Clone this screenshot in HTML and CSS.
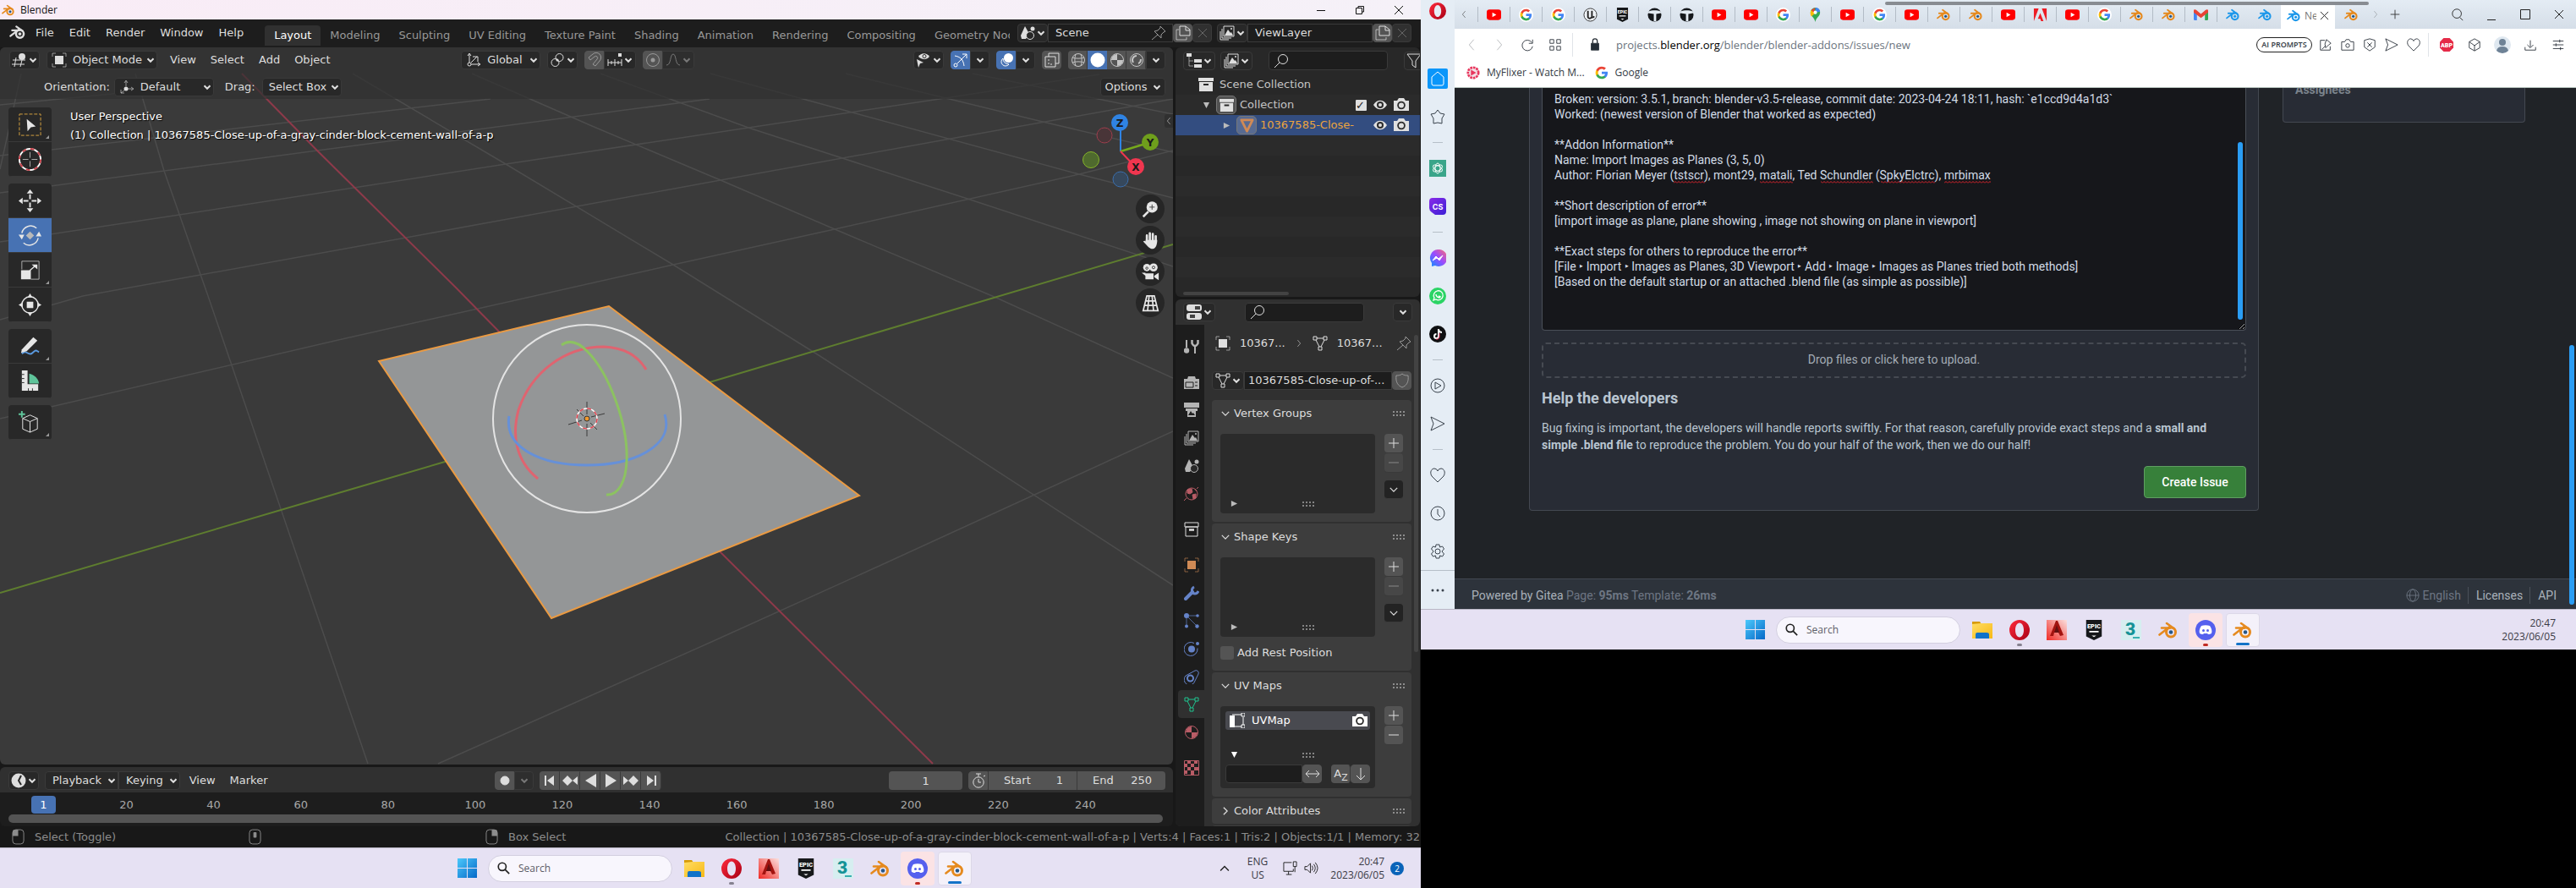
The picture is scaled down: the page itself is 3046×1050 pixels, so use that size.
FILE: index.html
```html
<!DOCTYPE html>
<html lang="en">
<head>
    <meta charset="UTF-8">
    <meta name="viewport" content="width=device-width, initial-scale=1.0">
    <title>Blender</title>
    <link rel="stylesheet" href="styles.css">
</head>
<body>
    <!-- gradients -->
    <svg class="paints" aria-hidden="true">
        <defs>
            <linearGradient id="g-opera" x1="0" y1="0" x2="1" y2="1"><stop offset="0" stop-color="#ff2b3d"/><stop offset="1" stop-color="#a70014"/></linearGradient>
            <linearGradient id="g-win" x1="0" y1="0" x2="1" y2="1"><stop offset="0" stop-color="#4cc9fb"/><stop offset="1" stop-color="#0568c8"/></linearGradient>
            <linearGradient id="g-folder" x1="0" y1="0" x2="1" y2="1"><stop offset="0" stop-color="#ffdc63"/><stop offset="1" stop-color="#f7b916"/></linearGradient>
            <linearGradient id="g-acad" x1="0" y1="1" x2="1" y2="0"><stop offset="0" stop-color="#f02a25"/><stop offset="1" stop-color="#fbe0de"/></linearGradient>
            <linearGradient id="g-cs" x1="0" y1="0" x2="1" y2="1"><stop offset="0" stop-color="#8a2be8"/><stop offset="1" stop-color="#3a1fd6"/></linearGradient>
            <linearGradient id="g-msg" x1="0" y1="1" x2="1" y2="0"><stop offset="0" stop-color="#0a90ff"/><stop offset=".5" stop-color="#9a4bff"/><stop offset="1" stop-color="#ff6b70"/></linearGradient>
            <pattern id="p-wave" width="4" height="3" patternUnits="userSpaceOnUse"><path d="M0 2.5l2-2 2 2" fill="none" stroke="#e0242c"/></pattern>
        </defs>
    </svg>
    <!-- icon sprite -->
    <svg class="sprite" aria-hidden="true">
        <symbol id="i-chev" viewBox="0 0 10 10"><path d="M1.5 3.2L5 6.8l3.5-3.6"/></symbol>
        <symbol id="i-tri-d" viewBox="0 0 10 10"><path d="M1 1h8L5 9z" fill="currentColor" stroke="none"/></symbol>
        <symbol id="i-tri-r" viewBox="0 0 10 10"><path d="M1 1l8 4-8 4z" fill="currentColor" stroke="none"/></symbol>
        <symbol id="i-blender" viewBox="0 0 24 20"><g fill="none" stroke="currentColor" stroke-linecap="round" stroke-linejoin="round"><circle cx="15" cy="12.5" r="5.5" stroke-width="3"/><path d="M1.5 15.5L13 6.5M4 7.5h10M10 2l9 6.5" stroke-width="2.6"/></g><circle cx="15" cy="12.5" r="2.3"/></symbol>
        <symbol id="i-3dview" viewBox="0 0 18 18"><path d="M1 9h15M0 14h15M5 6L3 17M12 9l-2 8"/><circle cx="12" cy="5" r="4" fill="currentColor" stroke="none"/></symbol>
        <symbol id="i-object" viewBox="0 0 18 18"><path d="M1 5V1h4M13 1h4v4M17 13v4h-4M5 17H1v-4" opacity=".6"/><path d="M4 4h10v10H4z" fill="currentColor" stroke="none"/></symbol>
        <symbol id="i-axes" viewBox="0 0 18 18"><circle cx="4" cy="14" r="2"/><path d="M4 12V2M2 4l2-3 2 3M6 14h10M14 12l3 2-3 2M6 12l7-7M8 5h6v6"/></symbol>
        <symbol id="i-axes2" viewBox="0 0 18 18"><circle cx="8" cy="11" r="2.5" fill="currentColor" stroke="none"/><path d="M8 8V2M6 4l2-3 2 3M10 11h6M14 9l3 2-3 2M6 13l-4 3M2 12v4h4" opacity=".6"/></symbol>
        <symbol id="i-pivot" viewBox="0 0 18 18"><circle cx="11.5" cy="6" r="4.5"/><circle cx="6.5" cy="12" r="4.5"/><circle cx="9" cy="9" r="1.5" fill="currentColor" stroke="none"/></symbol>
        <symbol id="i-magnet" viewBox="0 0 18 18"><path d="M2 6l5-4a5.5 5.5 0 0 1 8 8l-5 6-3-2 5-6a2 2 0 0 0-3-3L4 9z"/></symbol>
        <symbol id="i-snap" viewBox="0 0 18 18"><path d="M1 8v8M5 10v4M9 8v8M13 10v4M17 8v8M1 12h16"/><path d="M13 1h4v4h-4z" fill="currentColor" stroke="none"/></symbol>
        <symbol id="i-prop" viewBox="0 0 18 18"><circle cx="9" cy="9" r="7.5"/><circle cx="9" cy="9" r="2.5" fill="currentColor" stroke="none"/></symbol>
        <symbol id="i-curve" viewBox="0 0 18 18"><path d="M1 15c6 0 4-13 8-13s2 13 8 13"/></symbol>
        <symbol id="i-eyecur" viewBox="0 0 18 18"><path d="M3 5c3-5 10-5 13 0-3 4-9 4-13 0z" fill="currentColor" stroke="none"/><circle cx="10" cy="4.5" r="2" stroke="#282828" fill="none"/><path d="M1 8l8 4-4 1-2 5z" fill="currentColor" stroke="none"/></symbol>
        <symbol id="i-gizmo" viewBox="0 0 18 18"><circle cx="3" cy="15" r="2"/><path d="M2 4c6 1 10 4 11 12M5 13L16 2M11 2h5v5"/></symbol>
        <symbol id="i-overlay" viewBox="0 0 18 18"><circle cx="11.5" cy="6.5" r="5.5" fill="currentColor" stroke="none"/><path d="M5 7a5 5 0 1 0 7 7M5 7q0 6 7 7"/></symbol>
        <symbol id="i-xray" viewBox="0 0 18 18"><path d="M5 5V1h12v12h-4M1 5h12v12H1z"/><path d="M5 8v6h4" stroke-dasharray="2 2"/></symbol>
        <symbol id="i-wire" viewBox="0 0 18 18"><circle cx="9" cy="9" r="7.5"/><path d="M2 6c4 1.5 10 1.5 14 0M2 12c4-1.5 10-1.5 14 0M6 2c-1.5 4-1.5 10 0 14M12 2c1.5 4 1.5 10 0 14"/></symbol>
        <symbol id="i-solid" viewBox="0 0 18 18"><circle cx="9" cy="9" r="8.5" fill="currentColor" stroke="none"/></symbol>
        <symbol id="i-mat" viewBox="0 0 18 18"><circle cx="9" cy="9" r="7.5"/><path d="M9 2v7h7a7 7 0 0 1-7 7V9H2a7 7 0 0 1 7-7z" fill="currentColor" stroke="none"/></symbol>
        <symbol id="i-render" viewBox="0 0 18 18"><circle cx="9" cy="9" r="7.5"/><path d="M5 12a5 5 0 0 1 4-8M11 13c3-1 3-4 3-5" stroke-width="2"/></symbol>
        <symbol id="i-scene" viewBox="0 0 18 18"><path d="M6 1l5 9-4 6H2l-1-4z" fill="currentColor" stroke="none"/><circle cx="12" cy="12" r="4.5" fill="#282828"/><circle cx="15" cy="4" r="2.5" fill="currentColor" stroke="none"/></symbol>
        <symbol id="i-vlayer" viewBox="0 0 18 18"><path d="M5 1h12v12H5zM3 4v11h11M1 7v10h10"/><path d="M6 12l4-7 3 4 1-1 2 4z" fill="currentColor" stroke="none"/><circle cx="14" cy="4" r="1" fill="currentColor" stroke="none"/></symbol>
        <symbol id="i-copy" viewBox="0 0 18 18"><path d="M5 12V1h7l5 4v7zM12 1v5h5"/><path d="M4 5H1v12h12v-3" opacity=".7"/></symbol>
        <symbol id="i-x" viewBox="0 0 18 18"><path d="M4 4l10 10M14 4L4 14"/></symbol>
        <symbol id="i-pin" viewBox="0 0 18 18"><path d="M11 1l6 6-2 1-3 3v4l-8-8 4-1 3-3zM8 11l-7 6"/></symbol>
        <symbol id="i-search" viewBox="0 0 18 18"><circle cx="11" cy="7" r="5.5"/><path d="M7 11l-6 6"/></symbol>
        <symbol id="i-filter" viewBox="0 0 18 18"><path d="M1 1h16l-6 8v8l-4-3V9z"/></symbol>
        <symbol id="i-tree" viewBox="0 0 18 18"><path d="M0 0h6v4H0zM9 7h9v4H9zM9 13h9v4H9z" fill="currentColor" stroke="none"/><path d="M3 4v11h5M3 9h5" opacity=".6"/></symbol>
        <symbol id="i-coll" viewBox="0 0 18 18"><path d="M0 1h18v4H0zM1 6h16v11H1z" fill="currentColor" stroke="none"/><path d="M6 9h6" stroke="#282828" stroke-width="2"/></symbol>
        <symbol id="i-coll2" viewBox="0 0 18 18"><path d="M1 1h16v5H1zM2 6h14v11H2z"/><path d="M6 9.5h6" stroke-width="2.5"/></symbol>
        <symbol id="i-meshobj" viewBox="0 0 18 18"><path d="M2 2h14L9 16z" stroke-width="3" stroke-linejoin="round"/></symbol>
        <symbol id="i-mesh" viewBox="0 0 18 18"><path d="M1 1h4v4H1zM13 1h4v4h-4zM7 13h4v4H7zM5 3h8M4 5l4 8M14 5l-4 8"/></symbol>
        <symbol id="i-eye" viewBox="0 0 18 18"><path d="M1 9c4-7 12-7 16 0-4 7-12 7-16 0z" fill="currentColor" stroke="none"/><circle cx="9" cy="9" r="4" fill="#2b2b2b" stroke="none"/><circle cx="9" cy="9" r="2" fill="currentColor" stroke="none"/></symbol>
        <symbol id="i-cam" viewBox="0 0 18 18"><path d="M0 4h4l2-3h6l2 3h4v12H0z" fill="currentColor" stroke="none"/><circle cx="9" cy="9.5" r="4.8" fill="#2b2b2b" stroke="none"/><circle cx="9" cy="9.5" r="3" fill="currentColor" stroke="none"/></symbol>
        <symbol id="i-propedit" viewBox="0 0 18 18"><rect y="0" width="18" height="8" rx="3" fill="currentColor" stroke="none"/><rect y="10" width="18" height="8" rx="3" fill="currentColor" stroke="none"/><path d="M10 4h6M10 14h-6" stroke="#444" stroke-width="4"/></symbol>
        <symbol id="i-tool" viewBox="0 0 18 18"><path d="M3 1v9M13 8v9" stroke-width="2"/><circle cx="3" cy="13.5" r="3.2" fill="currentColor" stroke="none"/><path d="M9.5 1v4c2 4 5 4 7 0V1" stroke-width="2.5"/></symbol>
        <symbol id="i-rend2" viewBox="0 0 18 18"><path d="M0 5h4l1-3h8l1 3h4v12H0z" fill="currentColor" stroke="none"/><path d="M2 9h9v6H2zM13 9h3M13 13h3" stroke="#1d1d1d"/></symbol>
        <symbol id="i-out" viewBox="0 0 18 18"><path d="M0 0h18v6H0zM2 7h14v3h-2v7H4v-7H2z" fill="currentColor" stroke="none"/><path d="M5 15l3-5 2 3 1-1 2 3z" fill="#1d1d1d" stroke="none"/></symbol>
        <symbol id="i-world" viewBox="0 0 18 18"><circle cx="9" cy="9" r="7"/><path d="M4 4l5-1 1 4-3 2-3-1zM10 10l4-1v5l-3 1zM13 3l2 3" fill="currentColor"/><path d="M0 17l3-3M15 3l2-2"/></symbol>
        <symbol id="i-wrench" viewBox="0 0 18 18"><path d="M2 16L10 8" stroke-width="4" stroke-linecap="round"/><path d="M12 2c-4 2-3 8 1 8 2 0 3-1 4-3" stroke-width="3"/></symbol>
        <symbol id="i-part" viewBox="0 0 18 18"><circle cx="3" cy="3" r="3" fill="currentColor" stroke="none"/><path d="M3 3v12M3 3h12M4 4l11 11" opacity=".7"/><circle cx="3" cy="15.5" r="2" fill="currentColor" stroke="none"/><circle cx="16" cy="3" r="1.8" fill="currentColor" stroke="none"/><circle cx="15.5" cy="15.5" r="2.2" fill="currentColor" stroke="none"/></symbol>
        <symbol id="i-phys" viewBox="0 0 18 18"><circle cx="9" cy="9.5" r="4" fill="currentColor" stroke="none"/><path d="M12 2.5a8 8 0 1 0 4 6"/><circle cx="16" cy="3" r="2" fill="currentColor" stroke="none"/></symbol>
        <symbol id="i-constr" viewBox="0 0 18 18"><path d="M2 8L13 2a3 3 0 0 1 4 4l-4 8M2 8a6.5 6.5 0 1 0 11 6"/><circle cx="7.5" cy="11" r="3.5" stroke-width="2"/></symbol>
        <symbol id="i-tex" viewBox="0 0 18 18"><path d="M.5.5h17v17H.5z"/><path d="M4 0h4v4H4zM12 0h4v4h-4zM0 4h4v4H0zM8 4h4v4H8zM4 8h4v4H4zM12 8h5v4h-5zM0 12h4v4H0zM8 12h4v5H8z" fill="currentColor" stroke="none"/></symbol>
        <symbol id="i-shield" viewBox="0 0 18 18"><path d="M9 1c2 2 5 2 7 2 1 8-2 12-7 14C4 15 1 11 2 3c2 0 5 0 7-2z"/></symbol>
        <symbol id="i-uv" viewBox="0 0 18 18"><path d="M0 3h6v14H0z" fill="currentColor" stroke="none"/><path d="M3 2h11M6 16h8M16 5v9"/><path d="M14 0h4v4h-4zM14 14h4v4h-4z"/></symbol>
        <symbol id="i-plus" viewBox="0 0 18 18"><path d="M9 3v12M3 9h12"/></symbol>
        <symbol id="i-minus" viewBox="0 0 18 18"><path d="M3 9h12"/></symbol>
        <symbol id="i-lr" viewBox="0 0 18 18"><path d="M1 9h16M5 5L1 9l4 4M13 5l4 4-4 4"/></symbol>
        <symbol id="i-down" viewBox="0 0 18 18"><path d="M9 2v14M4 11l5 5 5-5"/></symbol>
        <symbol id="i-grip" viewBox="0 0 15 8"><path d="M0 2h15M0 6h15" stroke="currentColor" stroke-dasharray="2 2"/></symbol>
        <symbol id="i-clock" viewBox="0 0 18 18"><circle cx="9" cy="9" r="8.5" fill="currentColor" stroke="none"/><path d="M12 3L9 9l3 5" stroke="#282828" stroke-width="2"/></symbol>
        <symbol id="i-watch" viewBox="0 0 18 18"><circle cx="9" cy="11" r="6.2"/><path d="M9 7v4h3M6 1h6M9 1v3M15 4l2-1"/></symbol>
        <symbol id="i-mouse-l" viewBox="0 0 16 20"><rect x="1" y="1" width="14" height="18" rx="4"/><path d="M1 9V4a3 3 0 0 1 3-3h4v8z" fill="currentColor" stroke="none"/></symbol>
        <symbol id="i-mouse-m" viewBox="0 0 16 20"><rect x="1" y="1" width="14" height="18" rx="4"/><rect x="6" y="4" width="4" height="7" rx="1" fill="currentColor" stroke="none"/></symbol>
        <symbol id="i-mouse-r" viewBox="0 0 16 20"><rect x="1" y="1" width="14" height="18" rx="4"/><path d="M8 1h4a3 3 0 0 1 3 3v5H8z" fill="currentColor" stroke="none"/></symbol>
        <!-- tools -->
        <symbol id="t-select" viewBox="0 0 30 30"><rect x="2" y="2" width="26" height="26" stroke="#d9a441" stroke-dasharray="4 2"/><path d="M11 8l11 9-6 1-4 5z" fill="currentColor" stroke="none"/></symbol>
        <symbol id="t-cursor" viewBox="0 0 30 30"><circle cx="15" cy="15" r="13" stroke="#fff" stroke-width="2"/><circle cx="15" cy="15" r="13" stroke="#c8414a" stroke-width="2" stroke-dasharray="5 5.2"/><path d="M15 6v7M15 17v7M6 15h7M17 15h7" opacity=".7"/></symbol>
        <symbol id="t-move" viewBox="0 0 30 30"><path d="M15 7v6M15 17v6M7 15h6M17 15h6" stroke-width="2"/><path d="M11 6h8l-4-5zM11 24h8l-4 5zM6 11v8l-5-4zM24 11v8l5-4z" fill="currentColor" stroke="none"/></symbol>
        <symbol id="t-rotate" viewBox="0 0 30 30"><path d="M5 12a11 11 0 0 1 18-6M25 18a11 11 0 0 1-18 6" stroke-width="1.5"/><path d="M1 14h7l-3 6zM22 16h7l-3-6z" fill="currentColor" stroke="none"/><path d="M15 10l5 5-5 5-5-5z" fill="#b9b9b9" stroke="none"/></symbol>
        <symbol id="t-scale" viewBox="0 0 30 30"><path d="M5 14V4h21v22H16" opacity=".7"/><path d="M4 15h12v11H4zM17 8h7v6zM14 15l7-6 1 1-7 6z" fill="currentColor" stroke="none"/></symbol>
        <symbol id="t-trans" viewBox="0 0 30 30"><circle cx="15" cy="15" r="10" stroke-width="1.5"/><path d="M11 11h8v8h-8zM12 6h6l-3-5zM12 24h6l-3 5zM6 12v6l-5-3zM24 12v6l5-3z" fill="currentColor" stroke="none"/></symbol>
        <symbol id="t-note" viewBox="0 0 30 30"><path d="M5 24c6-6 8 4 13-1s5-2 8-1" stroke="#5a9ae0" stroke-width="2"/><path d="M5 19L19 4l5 4L11 21l-7 2z" fill="currentColor" stroke="none"/></symbol>
        <symbol id="t-measure" viewBox="0 0 30 30"><path d="M5 2h7v17h13v8H5z" fill="currentColor" stroke="none"/><path d="M14 6c7 2 11 6 12 12H14z" fill="#5fc49a" stroke="none"/><path d="M5 7h3M5 12h3M5 17h3M13 27v-3M18 27v-3" stroke="#282828"/></symbol>
        <symbol id="t-cube" viewBox="0 0 30 30"><path d="M6 10l9-4 9 4v13l-9 4-9-4zM6 10l9 4 9-4M15 14v13"/><path d="M5 1v8M1 5h8" stroke="#5fc49a" stroke-width="2"/></symbol>
        <symbol id="n-zoom" viewBox="0 0 24 24"><circle cx="14" cy="9" r="7.5" fill="currentColor" stroke="none"/><path d="M9 15l-7 7" stroke-width="3"/><path d="M14 5.5v7M10.5 9h7" stroke="#333"/></symbol>
        <symbol id="n-hand" viewBox="0 0 24 24"><path d="M7 13V5M11 12V2M15 12V3M19 14V6" stroke-width="3" stroke-linecap="round"/><path d="M5 11h16c0 6-2 12-6 12-5 0-6-3-13-10 2-2 4 0 4 1z" fill="currentColor" stroke="none"/></symbol>
        <symbol id="n-cam" viewBox="0 0 24 24"><circle cx="7" cy="6" r="5" fill="currentColor" stroke="none"/><circle cx="16" cy="6" r="5.5" fill="currentColor" stroke="none"/><path d="M5 14h11v8H5zM17 17l6-4v10l-6-4zM0 13h5v4z" fill="currentColor" stroke="none"/><circle cx="7" cy="7" r="1.5" stroke="#333"/><circle cx="16" cy="6" r="1.8" stroke="#333"/></symbol>
        <symbol id="n-grid" viewBox="0 0 24 24"><path d="M7 2h10l5 20H2zM5 9h14M4 15h17M10 2L8 22M14 2l2 20" stroke-width="2"/></symbol>
        <!-- favicons and app icons -->
        <symbol id="f-yt" viewBox="0 0 18 18"><rect y="2.5" width="18" height="13" rx="3.5" fill="#f00"/><path d="M7 6l5 3-5 3z" fill="#fff"/></symbol>
        <symbol id="f-google" viewBox="0 0 24 24"><path d="M22.56 12.25c0-.78-.07-1.53-.2-2.25H12v4.26h5.92c-.26 1.37-1.04 2.53-2.21 3.31v2.77h3.57c2.08-1.92 3.28-4.74 3.28-8.09z" fill="#4285f4"/><path d="M12 23c2.97 0 5.46-.98 7.28-2.66l-3.57-2.77c-.98.66-2.23 1.06-3.71 1.06-2.86 0-5.29-1.93-6.16-4.53H2.18v2.84C3.99 20.53 7.7 23 12 23z" fill="#34a853"/><path d="M5.84 14.09a6.6 6.6 0 0 1 0-4.18V7.07H2.18a11 11 0 0 0 0 9.86z" fill="#fbbc05"/><path d="M12 5.38c1.62 0 3.06.56 4.21 1.64l3.15-3.15C17.45 2.09 14.97 1 12 1 7.7 1 3.99 3.47 2.18 7.07l3.66 2.84c.87-2.6 3.3-4.53 6.16-4.53z" fill="#ea4335"/></symbol>
        <symbol id="f-unreal" viewBox="0 0 18 18"><circle cx="9" cy="9" r="8" fill="#f0f4f8" stroke="#333"/><path d="M6 4v8c1 2 3 2 5 0V4M11 12c1 1 2 0 3-1" fill="none" stroke="#222" stroke-width="2"/></symbol>
        <symbol id="f-epic" viewBox="0 0 24 26"><path d="M2 0h20v21l-10 5-10-5z" fill="#16181a"/><text x="12" y="11" text-anchor="middle" font-family="Roboto" font-weight="900" font-size="8" fill="#fff">EPIC</text><path d="M6 14h12v2H6zM9 20h6l-3 2z" fill="#fff"/></symbol>
        <symbol id="f-t" viewBox="0 0 18 18"><circle cx="9" cy="9" r="8.5" fill="#16191c"/><path d="M1 5c5-2 11-2 16 0v2l-6 1v9H8V8L1 7z" fill="#e4ecf3"/><path d="M4 3c3-2 7-2 10 0-3-1-7-1-10 0z" fill="#16191c"/></symbol>
        <symbol id="f-maps" viewBox="0 0 18 18"><path d="M9 0a6 6 0 0 1 6 6c0 5-5 6-6 12C8 12 3 11 3 6a6 6 0 0 1 6-6z" fill="#34a853"/><path d="M9 0a6 6 0 0 1 6 5l-5 1z" fill="#4285f4"/><path d="M4 3l5 4-5 4c-2-3-1-6 0-8z" fill="#fbbc04"/><path d="M9 0L4 3l3 3z" fill="#ea4335"/><circle cx="9" cy="6" r="2.2" fill="#fff"/></symbol>
        <symbol id="f-adobe" viewBox="0 0 18 18"><path d="M1 1h6L1 17zM17 1h-6l6 16zM9 7l4 10h-3l-1-3H6z" fill="#ed1c24"/></symbol>
        <symbol id="f-gmail" viewBox="0 0 18 14"><path d="M0 2h4v12H1l-1-1z" fill="#4285f4"/><path d="M14 2h4v11l-1 1h-3z" fill="#34a853"/><path d="M0 2c0-2 2-2 3-1l6 5 6-5c1-1 3-1 3 1v2l-9 7-9-7z" fill="#ea4335"/></symbol>
        <symbol id="f-flix" viewBox="0 0 18 18"><circle cx="9" cy="9" r="7" fill="#f2dfe4" stroke="#e8365d" stroke-width="3" stroke-dasharray="3 1"/><path d="M6 5l7 4-7 4z" fill="#e8365d"/></symbol>
        <symbol id="a-opera" viewBox="0 0 24 24"><path fill-rule="evenodd" d="M12 0a12 12 0 1 1 0 24 12 12 0 0 1 0-24zm0 3.5c-3 0-5 4-5 8.5s2 8.5 5 8.5 5-4 5-8.5-2-8.5-5-8.5z" fill="url(#g-opera)"/></symbol>
        <symbol id="a-win" viewBox="0 0 24 24"><path d="M0 0h11.5v11.5H0zM12.5 0H24v11.5H12.5zM0 12.5h11.5V24H0zM12.5 12.5H24V24H12.5z" fill="url(#g-win)"/></symbol>
        <symbol id="a-folder" viewBox="0 0 24 24"><path d="M0 2h9l2 3H0z" fill="#d79b06"/><path d="M0 5l10-1h14v18H0z" fill="url(#g-folder)"/><path d="M4 22v-5q0-2 2-2h11q3 0 3 2v5z" fill="#1072c9"/></symbol>
        <symbol id="a-acad" viewBox="0 0 24 24"><path d="M0 0h24v24H0z" fill="url(#g-acad)"/><path d="M11 1h2l7 17-4 1-2-4H9l-1 4H4z" fill="#a31410"/><path d="M12 6l3 9H9z" fill="#641010"/></symbol>
        <symbol id="a-max" viewBox="0 0 24 24"><path d="M0 0h24v24H0z" fill="#d6eef0"/><text x="11" y="18" text-anchor="middle" font-family="Roboto" font-weight="900" font-size="21" fill="#159396">3</text><path d="M14 20h8v2h-8z" fill="#38b0b0"/></symbol>
        <symbol id="a-discord" viewBox="0 0 24 24"><circle cx="12" cy="12" r="12" fill="#5560ee"/><path d="M7 7c3-1 7-1 10 0 2 3 3 6 2 9-2 1-3 1-4 1l-1-1h-4l-1 1c-1 0-2 0-4-1-1-3 0-6 2-9z" fill="#fff"/><circle cx="9.5" cy="12.5" r="1.5" fill="#5560ee"/><circle cx="14.5" cy="12.5" r="1.5" fill="#5560ee"/></symbol>
        <symbol id="a-gpt" viewBox="0 0 20 20"><path d="M0 0h20v20H0z" fill="#3aa58a"/><g fill="none" stroke="#fff"><ellipse cx="10" cy="10" rx="3" ry="6"/><ellipse cx="10" cy="10" rx="3" ry="6" transform="rotate(60 10 10)"/><ellipse cx="10" cy="10" rx="3" ry="6" transform="rotate(120 10 10)"/></g></symbol>
        <symbol id="a-cs" viewBox="0 0 20 20"><path d="M4 0h12q4 0 4 4v12q0 4-4 4H7l-4-3q-3-2-3-5V4q0-4 4-4z" fill="url(#g-cs)"/><text x="10" y="13.5" text-anchor="middle" font-family="Inter" font-weight="700" font-size="9" fill="#fff">CS</text></symbol>
        <symbol id="a-msg" viewBox="0 0 20 20"><path d="M10 0a10 10 0 1 1-3 19l-4 1v-4A10 10 0 0 1 10 0z" fill="url(#g-msg)"/><path d="M4 13l4-5 3 3 5-4-4 6-3-3z" fill="#fff" stroke="#fff"/></symbol>
        <symbol id="a-wa" viewBox="0 0 20 20"><circle cx="10" cy="10" r="10" fill="#2bd465"/><path d="M5 15l1-3a5.5 5.5 0 1 1 2 2z" fill="none" stroke="#fff" stroke-width="1.3"/><path d="M8 8c0 2 2 4 4 4l1-1-2-1" fill="none" stroke="#fff" stroke-width="1.5"/></symbol>
        <symbol id="a-tt" viewBox="0 0 20 20"><circle cx="10" cy="10" r="10" fill="#0f1012"/><path d="M11 4v8.5a2.5 2.5 0 1 1-2.5-2.5M11 5q1 3 4 3" fill="none" stroke="#fff" stroke-width="2"/><path d="M12 9v4a3 3 0 0 1-4 3" fill="none" stroke="#f0325a"/></symbol>
        <!-- browser line icons -->
        <symbol id="b-home" viewBox="0 0 18 18"><path d="M2 7l7-6 7 6v8q0 2-2 2H4q-2 0-2-2z"/></symbol>
        <symbol id="b-star" viewBox="0 0 18 18"><path d="M9 1l3 4 5 1-3 5v6l-5-1-5 1v-6L1 6l5-1z"/></symbol>
        <symbol id="b-play" viewBox="0 0 18 18"><circle cx="9" cy="9" r="8"/><path d="M6 5l7 4-7 4z"/></symbol>
        <symbol id="b-send" viewBox="0 0 18 18"><path d="M1 1l16 8-16 8 3-8z"/></symbol>
        <symbol id="b-heart" viewBox="0 0 18 18"><path d="M9 17L2 10C-1 5 2 1 5 1q3 0 4 3 1-3 4-3c3 0 6 4 3 9z"/></symbol>
        <symbol id="b-clock" viewBox="0 0 18 18"><circle cx="9" cy="9" r="8"/><path d="M9 4v6l3 3"/></symbol>
        <symbol id="b-gear" viewBox="0 0 18 18"><circle cx="9" cy="9" r="3"/><path d="M7 1h4l.5 3 3-1 2 3L14 9l2.500 3-2 3-3-1-.5 3H7l-.5-3-3 1-2-3L4 9 1.500 6l2-3 3 1z" stroke-linejoin="round"/></symbol>
        <symbol id="b-left" viewBox="0 0 18 18"><path d="M12 2L6 9l6 7"/></symbol>
        <symbol id="b-right" viewBox="0 0 18 18"><path d="M6 2l6 7-6 7"/></symbol>
        <symbol id="b-reload" viewBox="0 0 18 18"><path d="M15 6a7 7 0 1 0 1 5M16 2v5h-5"/></symbol>
        <symbol id="b-speed" viewBox="0 0 18 18"><path d="M2 2h5v5H2zM11 2h5v5h-5zM2 11h5v5H2zM11 11h5v5h-5z"/></symbol>
        <symbol id="b-lock" viewBox="0 0 18 18"><path d="M4 7h10v9H4z" fill="currentColor"/><path d="M6 7V4a3 3 0 0 1 6 0v3" stroke-width="1.5"/></symbol>
        <symbol id="b-edit" viewBox="0 0 18 18"><path d="M8 3H2v13h13v-5M10 2l6 5-3 2-4 4-1-5z"/><path d="M9 10l-5 5"/></symbol>
        <symbol id="b-cam" viewBox="0 0 18 18"><path d="M1 5h4l2-3h4l2 3h4v11H1z"/><circle cx="9" cy="10" r="2.5"/></symbol>
        <symbol id="b-shield" viewBox="0 0 18 18"><path d="M2 3l7-2 7 2v9l-7 5-7-5zM6 6l6 6M12 6l-6 6"/></symbol>
        <symbol id="b-abp" viewBox="0 0 18 18"><path d="M5 0h8l5 5v8l-5 5H5l-5-5V5z" fill="#e52a48" stroke="none"/><text x="9" y="12" text-anchor="middle" font-family="Roboto" font-weight="900" font-size="8" fill="#fff" stroke="none">ABP</text></symbol>
        <symbol id="b-cube" viewBox="0 0 18 18"><path d="M9 1l7 4v8l-7 4-7-4V5zM2 5l7 5 7-5M9 10v7"/></symbol>
        <symbol id="b-user" viewBox="0 0 20 20"><circle cx="10" cy="10" r="10" fill="#dfe8f0" stroke="none"/><circle cx="10" cy="7" r="4" fill="#6e8296" stroke="none"/><path d="M3 17q1-5 7-5t7 5q-3 3-7 3t-7-3z" fill="#6e8296" stroke="none"/></symbol>
        <symbol id="b-dl" viewBox="0 0 18 18"><path d="M9 3v9M5 9l4 4 4-4M2 12v4h14v-4"/></symbol>
        <symbol id="b-sliders" viewBox="0 0 18 18"><path d="M2 4h14M2 9h14M2 14h14M11 2v4M6 7v4M12 12v4"/></symbol>
        <symbol id="b-globe" viewBox="0 0 18 18"><circle cx="9" cy="9" r="8"/><ellipse cx="9" cy="9" rx="4" ry="8"/><path d="M1 9h16"/></symbol>
        <symbol id="w-find" viewBox="0 0 18 18"><circle cx="8" cy="8" r="6"/><path d="M12 13l4 4"/></symbol>
        <symbol id="w-min" viewBox="0 0 12 12"><path d="M1 6.5h10"/></symbol>
        <symbol id="w-rest" viewBox="0 0 12 12"><path d="M1.5 3.5h7v7h-7zM4 3V1.5h6.5V8H9"/></symbol>
        <symbol id="w-max" viewBox="0 0 12 12"><path d="M.5.5h11v11H.5z"/></symbol>
        <symbol id="w-x" viewBox="0 0 12 12"><path d="M1 1l10 10M11 1L1 11"/></symbol>
        <symbol id="w-net" viewBox="0 0 18 18"><path d="M11 2H1v11h12v-3M7 13v4M4 17h7M13 1h4v6h-4zM15 7v7"/></symbol>
        <symbol id="w-snd" viewBox="0 0 18 18"><path d="M1 7v4h3l4 4V3L4 7zM10 6q2 3 0 6M12 4q4 5 0 10M14 2q6 7 0 14"/></symbol>
    </svg>

    <div class="desktops">
        <div class="screen screen-main">
            <div class="titlebar">
                <svg class="logo orange"><use href="#i-blender"/></svg>
                <span class="title">Blender</span>
                <button class="wbtn" aria-label="Minimize"><svg><use href="#w-min"/></svg></button>
                <button class="wbtn" aria-label="Restore"><svg><use href="#w-rest"/></svg></button>
                <button class="wbtn" aria-label="Close"><svg><use href="#w-x"/></svg></button>
            </div>
            <div class="blender">
                <div class="topbar">
                    <button class="app-menu" aria-label="Blender"><svg><use href="#i-blender"/></svg></button>
                    <nav class="menus">
                        <button>File</button><button>Edit</button><button>Render</button><button>Window</button><button>Help</button>
                    </nav>
                    <nav class="workspaces">
                        <button class="active">Layout</button><button>Modeling</button><button>Sculpting</button><button>UV Editing</button><button>Texture Paint</button><button>Shading</button><button>Animation</button><button>Rendering</button><button>Compositing</button><button>Geometry Nodes</button>
                    </nav>
                    <div class="idblock">
                        <button class="btn drop" aria-label="Browse scene"><svg class="ic"><use href="#i-scene"/></svg><svg class="chev"><use href="#i-chev"/></svg></button>
                        <input class="field" type="text" value="Scene" aria-label="Scene">
                        <svg class="ic dim inpin"><use href="#i-pin"/></svg>
                        <button class="btn lite" aria-label="New scene"><svg class="ic"><use href="#i-copy"/></svg></button>
                        <button class="btn off" aria-label="Delete scene"><svg class="ic"><use href="#i-x"/></svg></button>
                    </div>
                    <div class="idblock">
                        <button class="btn drop" aria-label="Browse view layer"><svg class="ic"><use href="#i-vlayer"/></svg><svg class="chev"><use href="#i-chev"/></svg></button>
                        <input class="field" type="text" value="ViewLayer" aria-label="View layer">
                        <button class="btn lite" aria-label="New view layer"><svg class="ic"><use href="#i-copy"/></svg></button>
                        <button class="btn off" aria-label="Delete view layer"><svg class="ic"><use href="#i-x"/></svg></button>
                    </div>
                </div>

                <div class="areas">
                    <div class="left-areas">
                        <div class="viewport">
                            <svg class="scene3d" viewBox="0 0 1387 848" preserveAspectRatio="none">
                                <g transform="translate(0 -56)" fill="none">
                                    <g stroke="#4c4c4c" stroke-width="1.5">
                                        <path d="M0 124L245 100M0 184L580 117M0 228L375 178L839 117M0 286L212 254L598 194L885 151L1111 117L1300 88"/>
                                        <path d="M0 378L98 350L237 325L480 281L852 213L1124 164L1387 117M0 495L400 402L565 365L796 313L987 271L1276 206L1387 178"/>
                                        <path d="M518 903L839 760L1040 669L1387 510M25 87L0 200M160 87L194 202L246 350L435 903"/>
                                        <path d="M417 87L598 194L796 313L968 420L1387 692M558 87L700 149L852 213L987 271L1178 352L1387 447"/>
                                        <path d="M710 87L885 151L1144 235L1387 315M840 87L1008 133L1276 206L1387 234M1000 87L1233 144L1387 180M1150 87L1387 135"/>
                                    </g>
                                    <path d="M286 87L375 178L539 340L590 392L851 652L1103 903" stroke="#8d3a4a" stroke-width="2"/>
                                    <path d="M0 701L400 583L526 546L839 452L1387 289" stroke="#5e7d2f" stroke-width="2"/>
                                    <path d="M448 427L720 362L1016 586L652 731z" fill="#949697" stroke="#ea9a42" stroke-width="2"/>
                                    <circle cx="694" cy="495" r="111" stroke="#e4e4e4" stroke-width="2"/>
                                    <path d="M636 566C610 545 605 515 613 485C628 440 668 410 714 410C738 411 754 420 764 437" stroke="#df6470" stroke-width="3"/>
                                    <path d="M602 492C596 530 640 550 694 550C748 550 798 528 786 490" stroke="#6690d8" stroke-width="3"/>
                                    <path d="M664 408C672 402 682 403 694 415C722 443 743 505 741 545C740 570 731 586 717 585" stroke="#8cc261" stroke-width="3"/>
                                    <path d="M694 475v15M694 501v15M672 502l16-5M699 493l16-4M682 484l8 8M698 500l8 8" stroke="#3a3a3a"/>
                                    <circle cx="694" cy="495" r="12" stroke="#fff" stroke-width="1.5"/>
                                    <circle cx="694" cy="495" r="12" stroke="#e0434e" stroke-width="1.5" stroke-dasharray="5 4.4"/>
                                    <circle cx="694" cy="495" r="3" fill="#f0982e" stroke="#333"/>
                                </g>
                            </svg>
                            <div class="vp-header">
                                <button class="btn drop" aria-label="Editor type"><svg class="ic"><use href="#i-3dview"/></svg><svg class="chev"><use href="#i-chev"/></svg></button>
                                <div class="sel sel-mode"><svg class="ic"><use href="#i-object"/></svg><select aria-label="Mode"><option>Object Mode</option></select><svg class="chev"><use href="#i-chev"/></svg></div>
                                <nav class="menus"><button>View</button><button>Select</button><button>Add</button><button>Object</button></nav>
                                <span class="space-l"></span>
                                <div class="sel sel-global"><svg class="ic"><use href="#i-axes"/></svg><select aria-label="Transform orientation"><option>Global</option></select><svg class="chev"><use href="#i-chev"/></svg></div>
                                <button class="btn drop" aria-label="Pivot point"><svg class="ic"><use href="#i-pivot"/></svg><svg class="chev"><use href="#i-chev"/></svg></button>
                                <div class="group"><button class="btn lite" aria-label="Snap"><svg class="ic dim"><use href="#i-magnet"/></svg></button><button class="btn drop" aria-label="Snapping"><svg class="ic"><use href="#i-snap"/></svg><svg class="chev"><use href="#i-chev"/></svg></button></div>
                                <div class="group"><button class="btn lite" aria-label="Proportional editing"><svg class="ic dim"><use href="#i-prop"/></svg></button><button class="btn drop faint" aria-label="Falloff"><svg class="ic"><use href="#i-curve"/></svg><svg class="chev"><use href="#i-chev"/></svg></button></div>
                                <span class="space-r"></span>
                                <button class="btn drop" aria-label="Selectability"><svg class="ic"><use href="#i-eyecur"/></svg><svg class="chev"><use href="#i-chev"/></svg></button>
                                <div class="group"><button class="btn on" aria-label="Gizmos"><svg class="ic"><use href="#i-gizmo"/></svg></button><button class="btn" aria-label="Gizmo options"><svg class="chev"><use href="#i-chev"/></svg></button></div>
                                <div class="group"><button class="btn on" aria-label="Overlays"><svg class="ic"><use href="#i-overlay"/></svg></button><button class="btn" aria-label="Overlay options"><svg class="chev"><use href="#i-chev"/></svg></button></div>
                                <button class="btn lite" aria-label="X-ray"><svg class="ic"><use href="#i-xray"/></svg></button>
                                <div class="group shading"><button class="btn lite" aria-label="Wireframe"><svg class="ic"><use href="#i-wire"/></svg></button><button class="btn on" aria-label="Solid"><svg class="ic"><use href="#i-solid"/></svg></button><button class="btn lite" aria-label="Material preview"><svg class="ic"><use href="#i-mat"/></svg></button><button class="btn lite" aria-label="Rendered"><svg class="ic"><use href="#i-render"/></svg></button><button class="btn" aria-label="Shading options"><svg class="chev"><use href="#i-chev"/></svg></button></div>
                            </div>
                            <div class="vp-tools">
                                <label for="orient">Orientation:</label>
                                <div class="sel sel-orient"><svg class="ic"><use href="#i-axes2"/></svg><select id="orient"><option>Default</option></select><svg class="chev"><use href="#i-chev"/></svg></div>
                                <label for="drag">Drag:</label>
                                <div class="sel sel-drag"><select id="drag"><option>Select Box</option></select><svg class="chev"><use href="#i-chev"/></svg></div>
                                <button class="btn options">Options<svg class="chev"><use href="#i-chev"/></svg></button>
                            </div>
                            <div class="vp-body">
                                <div class="toolbar">
                                    <div class="toolset"><button aria-label="Select box" class="more"><svg><use href="#t-select"/></svg></button><button aria-label="Cursor"><svg><use href="#t-cursor"/></svg></button></div>
                                    <div class="toolset"><button aria-label="Move"><svg><use href="#t-move"/></svg></button><button class="active" aria-label="Rotate"><svg><use href="#t-rotate"/></svg></button><button aria-label="Scale" class="more"><svg><use href="#t-scale"/></svg></button><button aria-label="Transform"><svg><use href="#t-trans"/></svg></button></div>
                                    <div class="toolset"><button aria-label="Annotate" class="more"><svg><use href="#t-note"/></svg></button><button aria-label="Measure"><svg><use href="#t-measure"/></svg></button></div>
                                    <div class="toolset"><button aria-label="Add cube" class="more"><svg><use href="#t-cube"/></svg></button></div>
                                </div>
                                <div class="vp-info">
                                    <p>User Perspective</p>
                                    <p>(1) Collection | 10367585-Close-up-of-a-gray-cinder-block-cement-wall-of-a-p</p>
                                </div>
                                <div class="nav-col">
                                    <svg class="gizmo" viewBox="-5 0 100 90">
                                        <path d="M45 46V12" stroke="#2f83e3" stroke-width="2"/><path d="M45 46l36-11" stroke="#76a81c" stroke-width="2.5"/><path d="M45 46l18 19" stroke="#f0364f" stroke-width="2"/>
                                        <circle cx="26" cy="27" r="9" fill="#493538" stroke="#9c3e4d"/><circle cx="10" cy="56" r="9.5" fill="#4f6a2e" stroke="#86b42a"/><circle cx="45" cy="79" r="9" fill="#36485c" stroke="#3b6fae"/>
                                        <circle cx="44" cy="12" r="10" fill="#2f83e3"/><circle cx="80" cy="35" r="10" fill="#6f9f1c"/><circle cx="63" cy="64" r="10" fill="#f0364f"/>
                                        <g font-family="DejaVu Sans" font-size="12" font-weight="700" text-anchor="middle"><text x="44" y="16.5">Z</text><text x="80" y="39.5">Y</text><text x="63" y="68.5">X</text></g>
                                    </svg>
                                    <button aria-label="Zoom"><svg><use href="#n-zoom"/></svg></button>
                                    <button aria-label="Pan"><svg><use href="#n-hand"/></svg></button>
                                    <button aria-label="Camera view"><svg><use href="#n-cam"/></svg></button>
                                    <button aria-label="Perspective"><svg><use href="#n-grid"/></svg></button>
                                </div>
                                <button class="npanel" aria-label="Sidebar"><svg><use href="#b-left"/></svg></button>
                            </div>
                        </div>

                        <div class="timeline">
                            <div class="tl-header">
                                <button class="btn drop" aria-label="Editor type"><svg class="ic"><use href="#i-clock"/></svg><svg class="chev"><use href="#i-chev"/></svg></button>
                                <div class="group"><button class="btn word">Playback<svg class="chev"><use href="#i-chev"/></svg></button><button class="btn word">Keying<svg class="chev"><use href="#i-chev"/></svg></button></div>
                                <nav class="menus"><button>View</button><button>Marker</button></nav>
                                <span class="tl-space"></span>
                                <div class="group"><button class="btn lite" aria-label="Auto keying"><svg class="ic"><circle cx="9" cy="9" r="5" fill="currentColor"/></svg></button><button class="btn faint" aria-label="Keying options"><svg class="chev"><use href="#i-chev"/></svg></button></div>
                                <div class="group transport">
                                    <button class="btn lite" aria-label="Jump to start"><svg class="ic solid"><path d="M3 3h2v12H3zM14 3v12L6 9z"/></svg></button>
                                    <button class="btn lite" aria-label="Previous key"><svg class="ic solid"><path d="M6 3l6 6-6 6-6-6zM18 4v10l-6-5z"/></svg></button>
                                    <button class="btn lite" aria-label="Play reverse"><svg class="ic solid"><path d="M16 1v16L3 9z"/></svg></button>
                                    <button class="btn lite" aria-label="Play"><svg class="ic solid"><path d="M3 1v16l13-8z"/></svg></button>
                                    <button class="btn lite" aria-label="Next key"><svg class="ic solid"><path d="M12 3l6 6-6 6-6-6zM0 4v10l6-5z"/></svg></button>
                                    <button class="btn lite" aria-label="Jump to end"><svg class="ic solid"><path d="M13 3h2v12h-2zM4 3v12l8-6z"/></svg></button>
                                </div>
                                <span class="tl-space"></span>
                                <input class="frame" type="text" value="1" aria-label="Current frame">
                                <div class="group range">
                                    <button class="btn lite" aria-label="Preview range"><svg class="ic"><use href="#i-watch"/></svg></button>
                                    <label class="num">Start<input type="text" value="1"></label>
                                    <label class="num">End<input type="text" value="250"></label>
                                </div>
                            </div>
                            <div class="ruler">
                                <span class="playhead">1</span>
                                <span>20</span><span>40</span><span>60</span><span>80</span><span>100</span><span>120</span><span>140</span><span>160</span><span>180</span><span>200</span><span>220</span><span>240</span>
                            </div>
                            <div class="tl-scroll"></div>
                        </div>
                    </div>

                    <div class="right-areas">
                        <div class="outliner">
                            <div class="ol-header">
                                <button class="btn drop" aria-label="Editor type"><svg class="ic"><use href="#i-tree"/></svg><svg class="chev"><use href="#i-chev"/></svg></button>
                                <button class="btn drop" aria-label="Display mode"><svg class="ic"><use href="#i-vlayer"/></svg><svg class="chev"><use href="#i-chev"/></svg></button>
                                <div class="searchbox"><svg class="ic"><use href="#i-search"/></svg><input type="search" aria-label="Search outliner"></div>
                                <button class="btn filter" aria-label="Filter"><svg class="ic"><use href="#i-filter"/></svg></button>
                            </div>
                            <ul class="tree">
                                <li class="lvl0"><svg class="ic"><use href="#i-coll"/></svg><span>Scene Collection</span></li>
                                <li class="lvl1"><svg class="tri"><use href="#i-tri-d"/></svg><i class="badge"><svg class="ic"><use href="#i-coll"/></svg></i><span>Collection</span><input type="checkbox" checked aria-label="Exclude from view layer"><svg class="ic"><use href="#i-eye"/></svg><svg class="ic"><use href="#i-cam"/></svg></li>
                                <li class="lvl2 selected"><svg class="tri"><use href="#i-tri-r"/></svg><i class="badge"><svg class="ic tan"><use href="#i-meshobj"/></svg></i><span>10367585-Close-</span><svg class="ic"><use href="#i-eye"/></svg><svg class="ic"><use href="#i-cam"/></svg></li>
                                <li></li><li></li><li></li><li></li><li></li><li></li><li></li>
                            </ul>
                            <div class="hscroll"></div>
                        </div>

                        <div class="properties">
                            <div class="pr-header">
                                <button class="btn drop" aria-label="Editor type"><svg class="ic"><use href="#i-propedit"/></svg><svg class="chev"><use href="#i-chev"/></svg></button>
                                <div class="searchbox"><svg class="ic"><use href="#i-search"/></svg><input type="search" aria-label="Search properties"></div>
                                <button class="btn" aria-label="Options"><svg class="chev"><use href="#i-chev"/></svg></button>
                            </div>
                            <div class="pr-main">
                                <div class="pr-tabs">
                                    <div><button aria-label="Tool"><svg class="ic"><use href="#i-tool"/></svg></button></div>
                                    <div><button aria-label="Render"><svg class="ic"><use href="#i-rend2"/></svg></button><button aria-label="Output"><svg class="ic"><use href="#i-out"/></svg></button><button aria-label="View layer"><svg class="ic"><use href="#i-vlayer"/></svg></button><button aria-label="Scene"><svg class="ic"><use href="#i-scene"/></svg></button><button class="red" aria-label="World"><svg class="ic"><use href="#i-world"/></svg></button></div>
                                    <div><button class="white" aria-label="Collection"><svg class="ic"><use href="#i-coll2"/></svg></button></div>
                                    <div><button class="tan" aria-label="Object"><svg class="ic"><use href="#i-object"/></svg></button><button class="blue" aria-label="Modifiers"><svg class="ic"><use href="#i-wrench"/></svg></button><button class="blue" aria-label="Particles"><svg class="ic"><use href="#i-part"/></svg></button><button class="blue" aria-label="Physics"><svg class="ic"><use href="#i-phys"/></svg></button><button class="blue" aria-label="Constraints"><svg class="ic"><use href="#i-constr"/></svg></button><button class="green active" aria-label="Data"><svg class="ic"><use href="#i-mesh"/></svg></button><button class="red" aria-label="Material"><svg class="ic"><use href="#i-mat"/></svg></button></div>
                                    <div><button class="red" aria-label="Texture"><svg class="ic"><use href="#i-tex"/></svg></button></div>
                                </div>
                                <div class="pr-content">
                                    <div class="crumbs"><svg class="ic"><use href="#i-object"/></svg><span>10367...</span><svg class="ic sep"><use href="#b-right"/></svg><svg class="ic"><use href="#i-mesh"/></svg><span>10367...</span><svg class="ic dim"><use href="#i-pin"/></svg></div>
                                    <div class="idblock"><button class="btn drop" aria-label="Browse mesh"><svg class="ic"><use href="#i-mesh"/></svg><svg class="chev"><use href="#i-chev"/></svg></button><input class="field" type="text" value="10367585-Close-up-of-..." aria-label="Mesh name"><button class="btn lite" aria-label="Fake user"><svg class="ic dim"><use href="#i-shield"/></svg></button></div>
                                    <section class="panel">
                                        <h3><svg class="fold"><use href="#i-chev"/></svg>Vertex Groups<svg class="grip"><use href="#i-grip"/></svg></h3>
                                        <div class="listrow">
                                            <div class="list"><div class="listfoot"><svg class="tri"><use href="#i-tri-r"/></svg><svg class="grip"><use href="#i-grip"/></svg></div></div>
                                            <div class="listbtns"><button aria-label="Add"><svg class="ic"><use href="#i-plus"/></svg></button><button class="disabled" aria-label="Remove"><svg class="ic"><use href="#i-minus"/></svg></button><button class="dark" aria-label="Specials"><svg class="fold"><use href="#i-chev"/></svg></button></div>
                                        </div>
                                    </section>
                                    <section class="panel">
                                        <h3><svg class="fold"><use href="#i-chev"/></svg>Shape Keys<svg class="grip"><use href="#i-grip"/></svg></h3>
                                        <div class="listrow">
                                            <div class="list"><div class="listfoot"><svg class="tri"><use href="#i-tri-r"/></svg><svg class="grip"><use href="#i-grip"/></svg></div></div>
                                            <div class="listbtns"><button aria-label="Add"><svg class="ic"><use href="#i-plus"/></svg></button><button class="disabled" aria-label="Remove"><svg class="ic"><use href="#i-minus"/></svg></button><button class="dark" aria-label="Specials"><svg class="fold"><use href="#i-chev"/></svg></button></div>
                                        </div>
                                        <label class="check"><input type="checkbox">Add Rest Position</label>
                                    </section>
                                    <section class="panel">
                                        <h3><svg class="fold"><use href="#i-chev"/></svg>UV Maps<svg class="grip"><use href="#i-grip"/></svg></h3>
                                        <div class="listrow">
                                            <div class="list">
                                                <div class="listitem"><svg class="ic"><use href="#i-uv"/></svg><span>UVMap</span><svg class="ic"><use href="#i-cam"/></svg></div>
                                                <div class="listfoot open"><svg class="tri"><use href="#i-tri-d"/></svg><svg class="grip"><use href="#i-grip"/></svg></div>
                                                <div class="listfilter"><input type="text" aria-label="Filter by name"><button class="btn lite" aria-label="Invert"><svg class="ic"><use href="#i-lr"/></svg></button><button class="btn lite az" aria-label="Sort by name">A<sub>Z</sub></button><button class="btn lite" aria-label="Reverse"><svg class="ic"><use href="#i-down"/></svg></button></div>
                                            </div>
                                            <div class="listbtns"><button aria-label="Add"><svg class="ic"><use href="#i-plus"/></svg></button><button aria-label="Remove"><svg class="ic"><use href="#i-minus"/></svg></button></div>
                                        </div>
                                    </section>
                                    <section class="panel closed"><h3><svg class="fold right"><use href="#i-chev"/></svg>Color Attributes<svg class="grip"><use href="#i-grip"/></svg></h3></section>
                                    <section class="panel closed"></section>
                                </div>
                                <div class="vscroll"></div>
                            </div>
                        </div>
                    </div>
                </div>

                <div class="statusbar">
                    <span class="hint"><svg><use href="#i-mouse-l"/></svg>Select (Toggle)</span>
                    <span class="hint"><svg><use href="#i-mouse-m"/></svg></span>
                    <span class="hint last"><svg><use href="#i-mouse-r"/></svg>Box Select</span>
                    <span class="stats">Collection | 10367585-Close-up-of-a-gray-cinder-block-cement-wall-of-a-p | Verts:4 | Faces:1 | Tris:2 | Objects:1/1 | Memory: 32</span>
                </div>
            </div>
            <div class="taskbar">
                <div class="tb-center">
                    <button class="start" aria-label="Start"><svg><use href="#a-win"/></svg></button>
                    <div class="tb-search"><svg><use href="#i-search"/></svg><input type="search" placeholder="Search" aria-label="Search"></div>
                    <button class="app" aria-label="Explorer"><svg><use href="#a-folder"/></svg></button>
                    <button class="app run" aria-label="Opera"><svg><use href="#a-opera"/></svg></button>
                    <button class="app" aria-label="AutoCAD"><svg><use href="#a-acad"/></svg></button>
                    <button class="app" aria-label="Epic Games"><svg><use href="#f-epic"/></svg></button>
                    <button class="app" aria-label="3ds Max"><svg><use href="#a-max"/></svg></button>
                    <button class="app" aria-label="Blender"><svg class="orange"><use href="#i-blender"/></svg></button>
                    <button class="app alert" aria-label="Discord"><svg><use href="#a-discord"/></svg></button>
                    <button class="app current" aria-label="Blender"><svg class="orange"><use href="#i-blender"/></svg></button>
                </div>
                <div class="tray">
                    <svg class="up"><use href="#i-chev"/></svg>
                    <span class="lang">ENG<br>US</span>
                    <svg><use href="#w-net"/></svg>
                    <svg><use href="#w-snd"/></svg>
                    <time>20:47<br>2023/06/05</time>
                    <span class="count">2</span>
                </div>
            </div>
        </div>

        <div class="screen screen-side">
            <div class="opera">
                <aside class="rail">
                    <button class="opera-menu" aria-label="Opera"><svg class="app-ic"><use href="#a-opera"/></svg></button>
                    <button aria-label="Home" class="home"><svg><use href="#b-home"/></svg></button>
                    <button aria-label="Pinboards"><svg><use href="#b-star"/></svg></button>
                    <hr>
                    <button aria-label="ChatGPT"><svg class="app-ic"><use href="#a-gpt"/></svg></button>
                    <button aria-label="ChatSonic"><svg class="app-ic"><use href="#a-cs"/></svg></button>
                    <hr>
                    <button aria-label="Messenger"><svg class="app-ic"><use href="#a-msg"/></svg></button>
                    <button aria-label="WhatsApp"><svg class="app-ic"><use href="#a-wa"/></svg></button>
                    <button aria-label="TikTok"><svg class="app-ic"><use href="#a-tt"/></svg></button>
                    <hr>
                    <button aria-label="Player"><svg><use href="#b-play"/></svg></button>
                    <button aria-label="My Flow"><svg><use href="#b-send"/></svg></button>
                    <hr>
                    <button aria-label="Bookmarks"><svg><use href="#b-heart"/></svg></button>
                    <button aria-label="History"><svg><use href="#b-clock"/></svg></button>
                    <button aria-label="Settings"><svg><use href="#b-gear"/></svg></button>
                    <button class="dots" aria-label="More"><svg><circle cx="3" cy="9" r="1.5"/><circle cx="9" cy="9" r="1.5"/><circle cx="15" cy="9" r="1.5"/></svg></button>
                </aside>
                <div class="browser">
                    <div class="tabs">
                        <button class="tab-prev" aria-label="Scroll left"><svg><use href="#b-left"/></svg></button>
                        <button class="tab"><svg><use href="#f-yt"/></svg></button>
                        <button class="tab g"><svg><use href="#f-google"/></svg></button>
                        <button class="tab g"><svg><use href="#f-google"/></svg></button>
                        <button class="tab"><svg><use href="#f-unreal"/></svg></button>
                        <button class="tab"><svg><use href="#f-epic"/></svg></button>
                        <button class="tab"><svg><use href="#f-t"/></svg></button>
                        <button class="tab"><svg><use href="#f-t"/></svg></button>
                        <button class="tab"><svg><use href="#f-yt"/></svg></button>
                        <button class="tab"><svg><use href="#f-yt"/></svg></button>
                        <button class="tab g"><svg><use href="#f-google"/></svg></button>
                        <button class="tab"><svg><use href="#f-maps"/></svg></button>
                        <button class="tab"><svg><use href="#f-yt"/></svg></button>
                        <button class="tab g"><svg><use href="#f-google"/></svg></button>
                        <button class="tab"><svg><use href="#f-yt"/></svg></button>
                        <button class="tab"><svg class="orange"><use href="#i-blender"/></svg></button>
                        <button class="tab"><svg class="orange"><use href="#i-blender"/></svg></button>
                        <button class="tab"><svg><use href="#f-yt"/></svg></button>
                        <button class="tab"><svg><use href="#f-adobe"/></svg></button>
                        <button class="tab"><svg><use href="#f-yt"/></svg></button>
                        <button class="tab g"><svg><use href="#f-google"/></svg></button>
                        <button class="tab"><svg class="orange"><use href="#i-blender"/></svg></button>
                        <button class="tab"><svg class="orange"><use href="#i-blender"/></svg></button>
                        <button class="tab"><svg><use href="#f-gmail"/></svg></button>
                        <button class="tab"><svg class="sky"><use href="#i-blender"/></svg></button>
                        <button class="tab plain"><svg class="sky"><use href="#i-blender"/></svg></button>
                        <button class="tab current"><svg class="sky"><use href="#i-blender"/></svg><span>New</span><svg class="close"><use href="#w-x"/></svg></button>
                        <button class="tab plain"><svg class="orange"><use href="#i-blender"/></svg></button>
                        <button class="tab-next" aria-label="Scroll right"><svg><use href="#b-right"/></svg></button>
                        <button class="tab-new" aria-label="New tab"><svg><use href="#i-plus"/></svg></button>
                        <div class="win-btns"><button aria-label="Search tabs"><svg class="find"><use href="#w-find"/></svg></button><button aria-label="Minimize"><svg class="low"><use href="#w-min"/></svg></button><button aria-label="Maximize"><svg><use href="#w-max"/></svg></button><button aria-label="Close"><svg><use href="#w-x"/></svg></button></div>
                        <div class="tab-thumb"></div>
                    </div>
                    <div class="addressbar">
                        <button aria-label="Back" class="pale"><svg><use href="#b-left"/></svg></button>
                        <button aria-label="Forward" class="pale"><svg><use href="#b-right"/></svg></button>
                        <button aria-label="Reload"><svg><use href="#b-reload"/></svg></button>
                        <button aria-label="Speed dial"><svg><use href="#b-speed"/></svg></button>
                        <span class="bar"></span>
                        <svg class="lock"><use href="#b-lock"/></svg>
                        <a class="url" href="#">projects.<b>blender.org</b>/blender/blender-addons/issues/new</a>
                        <button class="prompts">AI PROMPTS</button>
                        <div class="acts"><button aria-label="Pin"><svg><use href="#b-edit"/></svg></button><button aria-label="Snapshot"><svg><use href="#b-cam"/></svg></button><button aria-label="Ad blocker"><svg><use href="#b-shield"/></svg></button><button aria-label="Send"><svg><use href="#b-send"/></svg></button><button aria-label="Bookmark"><svg><use href="#b-heart"/></svg></button></div>
                        <span class="bar"></span>
                        <div class="acts wide"><button aria-label="Adblock Plus"><svg><use href="#b-abp"/></svg></button><button aria-label="Extensions"><svg><use href="#b-cube"/></svg></button><button aria-label="Profile"><svg class="user"><use href="#b-user"/></svg></button><button aria-label="Downloads"><svg><use href="#b-dl"/></svg></button><button aria-label="Easy setup"><svg><use href="#b-sliders"/></svg></button></div>
                    </div>
                    <div class="bookmarks">
                        <a href="#"><svg><use href="#f-flix"/></svg>MyFlixer - Watch M...</a>
                        <a href="#"><svg><use href="#f-google"/></svg>Google</a>
                    </div>
                    <div class="page">
                        <div class="page-thumb"></div>
                        <main class="content">
                            <form class="issue">
                                <div class="editor">
                                    <textarea spellcheck="false" aria-label="Issue description">Broken: version: 3.5.1, branch: blender-v3.5-release, commit date: 2023-04-24 18:11, hash: `e1ccd9d4a1d3`
Worked: (newest version of Blender that worked as expected)

**Addon Information**
Name: Import Images as Planes (3, 5, 0)
Author: Florian Meyer (tstscr), mont29, matali, Ted Schundler (SpkyElctrc), mrbimax

**Short description of error**
[import image as plane, plane showing , image not showing on plane in viewport]

**Exact steps for others to reproduce the error**
[File ‣ Import ‣ Images as Planes, 3D Viewport ‣ Add ‣ Image ‣ Images as Planes tried both methods]
[Based on the default startup or an attached .blend file (as simple as possible)]</textarea>
                                    <svg class="squiggles"><g fill="url(#p-wave)"><rect x="156" width="37" height="3"/><rect x="258" width="39" height="3"/><rect x="330" width="62" height="3"/><rect x="401" width="64" height="3"/><rect x="476" width="55" height="3"/></g></svg>
                                    <div class="ta-thumb"></div>
                                </div>
                                <div class="dropzone">Drop files or click here to upload.</div>
                                <h2>Help the developers</h2>
                                <p>Bug fixing is important, the developers will handle reports swiftly. For that reason, carefully provide exact steps and a <b>small and simple .blend file</b> to reproduce the problem. You do your half of the work, then we do our half!</p>
                                <button type="button" class="create">Create Issue</button>
                            </form>
                            <div class="meta"><strong>Assignees</strong></div>
                        </main>
                        <footer class="foot">
                            <span>Powered by Gitea <span class="mute">Page: <b>95ms</b> Template: <b>26ms</b></span></span>
                            <nav><a class="mute" href="#"><svg><use href="#b-globe"/></svg>English</a><a href="#">Licenses</a><a href="#">API</a></nav>
                        </footer>
                    </div>
                </div>
            </div>
            <div class="taskbar">
                <div class="tb-center">
                    <button class="start" aria-label="Start"><svg><use href="#a-win"/></svg></button>
                    <div class="tb-search"><svg><use href="#i-search"/></svg><input type="search" placeholder="Search" aria-label="Search"></div>
                    <button class="app" aria-label="Explorer"><svg><use href="#a-folder"/></svg></button>
                    <button class="app run" aria-label="Opera"><svg><use href="#a-opera"/></svg></button>
                    <button class="app" aria-label="AutoCAD"><svg><use href="#a-acad"/></svg></button>
                    <button class="app" aria-label="Epic Games"><svg><use href="#f-epic"/></svg></button>
                    <button class="app" aria-label="3ds Max"><svg><use href="#a-max"/></svg></button>
                    <button class="app" aria-label="Blender"><svg class="orange"><use href="#i-blender"/></svg></button>
                    <button class="app alert" aria-label="Discord"><svg><use href="#a-discord"/></svg></button>
                    <button class="app current" aria-label="Blender"><svg class="orange"><use href="#i-blender"/></svg></button>
                </div>
                <div class="tray"><time>20:47<br>2023/06/05</time></div>
            </div>
        </div>
    </div>
</body>
</html>
```

FILE: styles.css
```css
*
{
    margin: 0;
    padding: 0;
    box-sizing: border-box;
}
body
{
    background-color: #000;
    overflow: hidden;
}
button, input, select, textarea
{
    font: inherit;
    color: inherit;
    background: none;
    border: none;
    outline: none;
    min-width: 0;
}
input[type=search]
{
    appearance: none;
}
svg
{
    flex: none;
    fill: none;
    stroke: none;
}
.paints
{
    position: absolute;
    width: 0;
    height: 0;
}
.sprite
{
    display: none;
}
.desktops
{
    display: flex;
    align-items: flex-start;
}
.screen
{
    min-width: 0;
    display: flex;
    flex-direction: column;
}
.screen-main
{
    flex: 1680 1 0;
    height: 100vh;
}
.screen-side
{
    flex: 1366 1 0;
}
.orange
{
    color: #e58a1f;
    fill: #265787;
}
.sky
{
    color: #1e98ea;
    fill: #1e98ea;
}
.titlebar
{
    height: 23px;
    display: flex;
    align-items: center;
    gap: 6px;
    padding: 0 13px 0 2px;
    background: linear-gradient(90deg, #f9ecf6, #f5f1f8);
    font: 12px/16px "Open Sans", sans-serif;
    color: #111;
}
.logo
{
    width: 16px;
    height: 14px;
}
.title
{
    flex: 1;
}
.wbtn
{
    width: 26px;
    height: 20px;
    margin-left: 14px;
    display: flex;
    align-items: center;
    justify-content: center;
}
.wbtn svg
{
    width: 12px;
    height: 12px;
    stroke: #111;
}

/* ---------- blender window ---------- */
.blender
{
    flex: 1;
    min-height: 0;
    display: flex;
    flex-direction: column;
    background-color: #181818;
    color: #dedede;
    font: 13px/16px "DejaVu Sans", sans-serif;
}
.blender svg
{
    stroke: currentColor;
}
.ic
{
    width: 18px;
    height: 18px;
}
.ic.dim
{
    color: #999;
}
.blender .ic.solid
{
    fill: currentColor;
    stroke: none;
}
.chev
{
    width: 10px;
    height: 10px;
    stroke-width: 2;
}
.btn
{
    height: 22px;
    min-width: 23px;
    display: flex;
    flex: none;
    align-items: center;
    justify-content: center;
    background-color: #282828;
    border: 1px solid #3a3a3a;
    border-radius: 4px;
}
.drop
{
    width: 36px;
    gap: 2px;
}
.lite
{
    background-color: #545454;
    border-color: #545454;
}
.off
{
    background-color: #303030;
    color: #666;
}
.on
{
    background-color: #4772b3;
    border-color: #4772b3;
    color: #fff;
}
.faint
{
    background-color: #2e2e2e;
    color: #777;
}
.group
{
    display: flex;
    flex: none;
}
.group > :not(:last-child)
{
    border-top-right-radius: 0;
    border-bottom-right-radius: 0;
}
.group > :not(:first-child)
{
    border-top-left-radius: 0;
    border-bottom-left-radius: 0;
}
.group .drop
{
    width: 38px;
}
.shading .lite
{
    border-right-color: #3a3a3a;
    color: #c4c4c4;
}
.sel
{
    position: relative;
    display: flex;
    align-items: center;
    height: 22px;
    flex: none;
    padding-left: 5px;
    background-color: #282828;
    border: 1px solid #3a3a3a;
    border-radius: 4px;
}
.sel select
{
    appearance: none;
    flex: 1;
    padding: 0 12px 0 7px;
}
.sel .chev
{
    position: absolute;
    right: 2px;
}
.sel-mode
{
    width: 131px;
}
.sel-global
{
    width: 94px;
}
.sel-orient
{
    width: 118px;
}
.sel-drag
{
    width: 94px;
    padding-left: 0;
}
.topbar
{
    height: 33px;
    flex: none;
    display: flex;
    align-items: center;
    padding: 0 11px 2px 11px;
    background-color: #1d1d1d;
}
.app-menu
{
    width: 20px;
    height: 20px;
    margin-right: 11px;
}
.blender .app-menu svg
{
    width: 20px;
    height: 18px;
    stroke: none;
    fill: #ddd;
}
.menus
{
    display: flex;
    flex: none;
    gap: 17px;
}
.topbar .menus
{
    gap: 18px;
}
.workspaces
{
    flex: 1;
    min-width: 0;
    overflow: hidden;
    display: flex;
    align-self: flex-end;
    margin: 0 9px 0 25px;
    color: #989898;
}
.workspaces button
{
    flex: none;
    height: 24px;
    padding: 0 11px;
    border-radius: 4px 4px 0 0;
}
.workspaces .active
{
    background-color: #303030;
    color: #fff;
}
.idblock
{
    position: relative;
    display: flex;
    flex: none;
}
.topbar .idblock
{
    width: 230px;
}
.topbar .idblock + .idblock
{
    margin-left: 6px;
}
.field
{
    flex: 1;
    padding: 0 8px;
    background-color: #1d1d1d;
    border: 1px solid #3a3a3a;
}
.inpin
{
    position: absolute;
    right: 54px;
    top: 2px;
}
.areas
{
    flex: 1;
    min-height: 0;
    display: flex;
    gap: 3px;
    padding-right: 1px;
}
.left-areas
{
    flex: 1;
    min-width: 0;
    display: flex;
    flex-direction: column;
    gap: 3px;
}
.viewport
{
    position: relative;
    flex: 1;
    min-height: 0;
    overflow: hidden;
    border-radius: 6px;
    background-color: #3a3a3a;
}
.scene3d
{
    position: absolute;
    inset: 0;
    width: 100%;
    height: 100%;
}
.vp-header, .vp-tools
{
    position: relative;
    display: flex;
    align-items: center;
    background-color: rgba(48, 48, 48, .7);
}
.vp-header
{
    height: 30px;
    gap: 8px;
    padding: 0 9px 0 11px;
}
.vp-header .menus
{
    margin-left: 7px;
}
.space-l
{
    flex: 4;
}
.space-r
{
    flex: 7;
}
.vp-tools
{
    height: 31px;
    padding: 3px 9px 0 52px;
    gap: 5px;
}
.sel-orient + label
{
    margin-left: 8px;
}
.vp-tools .sel-drag
{
    margin-left: 3px;
}
.options
{
    margin-left: auto;
    width: 77px;
    gap: 6px;
}
.vp-body
{
    position: relative;
    display: flex;
    padding: 10px 10px 0 10px;
}
.toolbar
{
    width: 51px;
    flex: none;
    display: flex;
    flex-direction: column;
    gap: 8px;
}
.toolset
{
    border-radius: 4px;
    overflow: hidden;
}
.toolset button
{
    position: relative;
    width: 100%;
    height: 41px;
    display: flex;
    align-items: center;
    justify-content: center;
    background-color: #282828;
    border-bottom: 1px solid #3a3a3a;
    color: #e6e6e6;
}
.toolset .active
{
    background-color: #4772b3;
}
.toolset .more::after
{
    content: "";
    position: absolute;
    right: 3px;
    bottom: 3px;
    border: 2px solid;
    border-color: transparent #999 #999 transparent;
}
.toolset svg
{
    width: 29px;
    height: 29px;
}
.vp-info
{
    flex: 1;
    padding-left: 22px;
    line-height: 22px;
    color: #fff;
    text-shadow: 1px 1px 1px #000;
}
.nav-col
{
    width: 104px;
    display: flex;
    flex-direction: column;
    align-items: flex-end;
    gap: 3px;
}
.nav-col button
{
    width: 34px;
    height: 34px;
    display: flex;
    align-items: center;
    justify-content: center;
    border-radius: 50%;
    background-color: #262626;
    color: #e6e6e6;
}
.nav-col button svg
{
    width: 21px;
    height: 21px;
}
.blender .gizmo
{
    width: 100px;
    height: 90px;
    margin: 6px 2px 4px 0;
    stroke: none;
}
.gizmo text
{
    fill: #1a1a1a;
}
.npanel
{
    position: absolute;
    right: 0;
    top: 18px;
    width: 10px;
    height: 16px;
    display: flex;
    background-color: #303030;
    border-radius: 3px 0 0 3px;
}
.npanel svg
{
    width: 10px;
    height: 16px;
}
.timeline
{
    height: 70px;
    flex: none;
    overflow: hidden;
    border-radius: 6px;
    background-color: #1d1d1d;
}
.tl-header
{
    height: 30px;
    display: flex;
    align-items: center;
    gap: 7px;
    padding: 2px 9px 0 10px;
    background-color: #303030;
}
.word
{
    padding: 0 2px 0 8px;
    gap: 7px;
}
.tl-header .menus
{
    margin-left: 4px;
}
.tl-space
{
    flex: 1;
}
.transport .btn
{
    width: 24px;
    border-right-color: #3a3a3a;
}
.frame
{
    width: 87px;
    height: 22px;
    text-align: center;
    background-color: #545454;
    border-radius: 4px;
}
.num
{
    width: 105px;
    height: 22px;
    display: flex;
    align-items: center;
    padding: 0 16px 0 18px;
    background-color: #545454;
    border-left: 1px solid #3a3a3a;
    border-radius: 4px;
}
.num input
{
    width: 36px;
    margin-left: auto;
    text-align: right;
}
.ruler
{
    position: relative;
    height: 26px;
    display: flex;
    align-items: center;
    padding: 4px 52px 0 98px;
    color: #a8a8a8;
}
.ruler span
{
    flex: 1;
    text-align: center;
}
.ruler .playhead
{
    position: absolute;
    left: 37px;
    top: 4px;
    width: 29px;
    height: 21px;
    line-height: 21px;
    border-radius: 4px;
    background-color: #4772b3;
    color: #fff;
}
.tl-scroll
{
    height: 10px;
    margin: 0 12px 0 10px;
    border-radius: 5px;
    background-color: #545454;
}

/* right column */
.right-areas
{
    width: 289px;
    flex: none;
    display: flex;
    flex-direction: column;
    gap: 3px;
}
.outliner
{
    height: 295px;
    flex: none;
    overflow: hidden;
    border-radius: 6px;
    background-color: #282828;
}
.ol-header
{
    height: 31px;
    display: flex;
    align-items: center;
    padding-left: 9px;
    gap: 6px;
}
.ol-header .drop, .pr-header .drop
{
    width: 38px;
}
.searchbox
{
    display: flex;
    align-items: center;
    width: 141px;
    height: 23px;
    padding-left: 5px;
    background-color: #1d1d1d;
    border: 1px solid #3a3a3a;
    border-radius: 4px;
}
.searchbox input
{
    flex: 1;
}
.ol-header .searchbox
{
    margin: 0 13px;
}
.filter
{
    width: 30px;
    justify-content: flex-start;
    padding-left: 2px;
}
.tree
{
    list-style: none;
    padding-top: 1px;
    color: #c4c4c4;
}
.tree li
{
    height: 24px;
    display: flex;
    align-items: center;
    gap: 7px;
    padding-right: 13px;
}
.tree li:nth-child(even)
{
    background-color: #2b2b2b;
}
.tree .ic
{
    color: #e0e0e0;
}
.tree span
{
    flex: 1;
    white-space: nowrap;
    margin-left: -3px;
}
.tree .lvl0
{
    padding-left: 27px;
}
.tree .lvl0 span
{
    margin-left: 0;
}
.tree .lvl1
{
    padding-left: 32px;
}
.tree .lvl2
{
    padding-left: 56px;
}
.tree .selected
{
    background-color: #334d80;
    color: #eba43e;
}
.tree input
{
    appearance: none;
    width: 13px;
    height: 13px;
    background-color: #e0e0e0;
    border-radius: 1px;
    color: #222;
}
.tree input::after
{
    content: "✓";
    display: block;
    font-weight: 700;
    line-height: 13px;
}
.tri
{
    width: 9px;
    height: 9px;
    color: #bbb;
}
.badge
{
    width: 24px;
    height: 22px;
    display: flex;
    align-items: center;
    justify-content: center;
    border: 1px solid #777;
    border-radius: 5px;
    background-color: rgba(200, 200, 200, .25);
}
.badge .ic
{
    width: 17px;
    height: 17px;
}
.tree .tan, .tan
{
    color: #d08a55;
}
.hscroll
{
    width: 125px;
    height: 4px;
    margin: 17px 0 0 9px;
    border-radius: 2px;
    background-color: #434343;
}
.properties
{
    flex: 1;
    min-height: 0;
    overflow: hidden;
    display: flex;
    flex-direction: column;
    border-radius: 6px;
    background-color: #303030;
}
.pr-header
{
    height: 30px;
    flex: none;
    display: flex;
    align-items: center;
    justify-content: space-between;
    padding: 0 9px;
}
.pr-main
{
    flex: 1;
    min-height: 0;
    display: flex;
}
.pr-tabs
{
    width: 34px;
    flex: none;
    display: flex;
    flex-direction: column;
    gap: 9px;
    padding: 9px 0 0 3px;
    background-color: #1d1d1d;
    color: #b4b4b4;
}
.pr-tabs button
{
    width: 31px;
    height: 33px;
    display: flex;
    align-items: center;
    padding-left: 7px;
    border-radius: 4px 0 0 4px;
}
.pr-tabs .active
{
    background-color: #303030;
}
.red
{
    color: #b95c66;
}
.blue
{
    color: #6583c8;
}
.green
{
    color: #1fc48f;
}
.white
{
    color: #e0e0e0;
}
.pr-content
{
    flex: 1;
    min-width: 0;
    overflow: hidden;
    padding: 11px 0 0 9px;
    display: flex;
    flex-direction: column;
}
.crumbs
{
    height: 22px;
    flex: none;
    margin: 0 0 22px 4px;
    display: flex;
    align-items: center;
    gap: 11px;
}
.crumbs .sep
{
    width: 10px;
    height: 12px;
}
.crumbs .ic:last-child
{
    margin-left: auto;
}
.pr-content .idblock
{
    margin-bottom: 12px;
}
.pr-content .idblock .drop
{
    width: 38px;
}
.pr-content .field
{
    padding: 0 4px;
}
.panel
{
    flex: none;
    margin-bottom: 2px;
    padding: 0 10px 10px;
    border-radius: 4px;
    background-color: #3d3d3d;
}
.panel h3
{
    height: 32px;
    display: flex;
    align-items: center;
    gap: 4px;
    font-weight: 400;
    font-size: 13px;
}
.fold
{
    width: 12px;
    height: 12px;
}
.fold.right
{
    transform: rotate(-90deg);
}
.grip
{
    width: 15px;
    height: 8px;
}
.panel h3 .grip
{
    margin-left: auto;
    margin-right: -3px;
}
.listrow
{
    display: flex;
    gap: 11px;
    margin-top: 8px;
}
.list
{
    flex: 1;
    min-width: 0;
    min-height: 94px;
    display: flex;
    flex-direction: column;
    padding: 6px;
    border-radius: 4px;
    background-color: #2b2b2b;
}
.listfoot
{
    margin-top: auto;
    display: flex;
    align-items: center;
    gap: 76px;
    padding: 0 0 1px 6px;
}
.listfoot.open
{
    margin: 25px 0 6px;
}
.listfoot.open .tri
{
    color: #fff;
}
.listitem
{
    height: 22px;
    display: flex;
    align-items: center;
    gap: 8px;
    padding: 0 3px 0 5px;
    border-radius: 3px;
    background-color: #494a50;
    color: #fff;
}
.listitem span
{
    flex: 1;
}
.listfilter
{
    display: flex;
}
.listfilter input
{
    flex: 1;
    width: 0;
    background-color: #1d1d1d;
    border: 1px solid #3a3a3a;
    border-radius: 4px 0 0 4px;
}
.listfilter .btn
{
    width: 23px;
}
.listfilter .az
{
    display: block;
    margin-left: 11px;
    border-right-color: #3a3a3a;
    line-height: 18px;
}
.az sub
{
    line-height: 0;
}
.listbtns
{
    width: 22px;
}
.listbtns button
{
    width: 22px;
    height: 23px;
    display: flex;
    align-items: center;
    justify-content: center;
    background-color: #545454;
    border-bottom: 1px solid #3a3a3a;
    border-radius: 4px;
}
.listbtns .disabled
{
    background-color: #474747;
    color: #888;
}
.listbtns .dark
{
    height: 22px;
    margin-top: 9px;
    background-color: #232323;
}
.check
{
    display: flex;
    align-items: center;
    gap: 4px;
    height: 18px;
    margin: 10px 0 2px;
}
.check input
{
    appearance: none;
    width: 16px;
    height: 16px;
    border-radius: 3px;
    background-color: #545454;
}
.panel.closed
{
    min-height: 30px;
    padding-bottom: 0;
}
.panel.closed h3
{
    height: 30px;
}
.vscroll
{
    width: 5px;
    height: 375px;
    flex: none;
    margin: 12px 2px 0 3px;
    border-radius: 3px;
    background-color: #434343;
}
.statusbar
{
    height: 25px;
    flex: none;
    display: flex;
    align-items: center;
    padding-left: 14px;
    color: #8c8c8c;
}
.hint
{
    flex: 0 0 280px;
    display: flex;
    align-items: center;
    gap: 12px;
}
.hint.last
{
    flex: none;
}
.hint svg
{
    width: 15px;
    height: 19px;
}
.stats
{
    flex: 1;
    white-space: nowrap;
    text-align: right;
    padding-right: 1px;
}

/* ---------- taskbar ---------- */
.taskbar
{
    position: relative;
    height: 48px;
    flex: none;
    display: flex;
    align-items: center;
    justify-content: center;
    background-color: #e6e1f3;
    border-top: 1px solid #b9b6c4;
    font: 12px/16px "Open Sans", sans-serif;
    color: #3a3a44;
}
.tb-center
{
    display: flex;
    align-items: center;
    gap: 4px;
    margin-left: 9px;
}
.start
{
    width: 24px;
    height: 24px;
    margin-right: 9px;
}
.start svg
{
    width: 23px;
    height: 23px;
}
.tb-search
{
    width: 218px;
    height: 32px;
    display: flex;
    align-items: center;
    gap: 10px;
    margin-right: 2px;
    padding-left: 10px;
    background-color: #f8f6fd;
    border: 1px solid #d3cfe0;
    border-radius: 16px;
}
.tb-search svg
{
    width: 15px;
    height: 15px;
    stroke: #222;
    stroke-width: 2;
    transform: scaleX(-1);
}
.tb-search input::placeholder
{
    color: #5c5c66;
}
.app
{
    position: relative;
    width: 40px;
    height: 40px;
    display: flex;
    align-items: center;
    justify-content: center;
    border-radius: 4px;
}
.app svg
{
    width: 24px;
    height: 24px;
}
.app.run::after, .app.alert::after, .app.current::after
{
    content: "";
    position: absolute;
    bottom: 1px;
    width: 6px;
    height: 3px;
    border-radius: 2px;
    background-color: #85818f;
}
.app.alert
{
    background-color: #fbe3e5;
}
.app.alert::after
{
    background-color: #c02a22;
}
.app.current
{
    background-color: #f4f1fa;
    border: 1px solid #dcd8e8;
}
.app.current::after
{
    width: 16px;
    background-color: #1473c8;
}
.tray
{
    position: absolute;
    right: 20px;
    top: 0;
    height: 47px;
    display: flex;
    align-items: center;
    text-align: right;
}
.screen-side .tray
{
    right: 24px;
}
.tray svg
{
    width: 17px;
    height: 17px;
    margin-left: 8px;
    stroke: #222;
}
.tray .up
{
    width: 14px;
    height: 14px;
    transform: rotate(180deg);
}
.lang
{
    margin: 0 10px 0 20px;
    text-align: center;
}
.tray time
{
    margin-left: 14px;
}
.count
{
    width: 16px;
    height: 16px;
    margin-left: 7px;
    border-radius: 50%;
    background-color: #0a63b8;
    color: #fff;
    font-size: 10px;
    text-align: center;
}

/* ---------- opera window ---------- */
.opera
{
    display: flex;
    font: 12px/16px "Open Sans", sans-serif;
    color: #333b44;
}
.rail
{
    width: 40px;
    flex: none;
    display: flex;
    flex-direction: column;
    align-items: center;
    background-color: #e5edf5;
}
.rail button
{
    width: 40px;
    height: 45px;
    display: flex;
    align-items: center;
    justify-content: center;
}
.rail svg
{
    width: 18px;
    height: 18px;
    stroke: #39424c;
}
.rail .app-ic
{
    width: 20px;
    height: 20px;
    stroke: none;
}
.rail .opera-menu
{
    height: 26px;
    margin-bottom: 44px;
}
.rail .home svg
{
    width: 24px;
    height: 24px;
    padding: 3px;
    border-radius: 2px;
    background-color: #0a96fa;
    stroke: #fff;
}
.rail hr
{
    width: 12px;
    height: 1px;
    margin: 8px 0 7px;
    border: none;
    background-color: #b6bfc8;
}
.rail .dots
{
    flex: 1;
    border-top: 1px solid #b6bfc8;
}
.rail .dots svg
{
    fill: #39424c;
    stroke: none;
}
.browser
{
    flex: 1;
    min-width: 0;
    display: flex;
    flex-direction: column;
}
.tabs
{
    position: relative;
    height: 34px;
    display: flex;
    align-items: center;
    background: linear-gradient(#e4ecf4, #d5dee8);
}
.tabs button
{
    display: flex;
    align-items: center;
    justify-content: center;
    flex: none;
}
.tab-prev
{
    width: 27px;
    padding-right: 6px;
}
.tab-prev svg, .tab-next svg
{
    width: 10px;
    height: 14px;
    stroke: #333;
}
.tab-next
{
    width: 20px;
    opacity: .5;
}
.tab
{
    width: 38px;
    height: 18px;
    border-left: 1px solid #b3bcc6;
}
.tab.plain
{
    border-color: transparent;
}
.tab svg
{
    width: 17px;
    height: 17px;
}
.tab.g svg
{
    padding: 1px;
    border-radius: 50%;
    background-color: #fff;
}
.tabs .tab.current
{
    width: 64px;
    height: 31px;
    align-self: flex-end;
    background-color: #fff;
    border: none;
    color: #777;
    gap: 4px;
}
.tab.current span
{
    width: 14px;
    overflow: hidden;
    line-height: 18px;
}
.tab .close
{
    width: 11px;
    height: 11px;
    stroke: #222;
}
.tab-new
{
    width: 26px;
}
.tab-new svg
{
    width: 16px;
    height: 16px;
    stroke: #333;
}
.win-btns
{
    margin-left: auto;
    display: flex;
}
.win-btns button
{
    width: 40px;
    height: 20px;
}
.win-btns svg
{
    width: 12px;
    height: 12px;
    stroke: #222;
}
.win-btns .find
{
    width: 16px;
    height: 16px;
}
.win-btns .low
{
    margin-top: 11px;
}
.tab-thumb
{
    position: absolute;
    top: 2px;
    right: 245px;
    width: 572px;
    height: 4px;
    border-radius: 2px;
    background-color: #888c92;
}
.addressbar
{
    height: 38px;
    display: flex;
    align-items: center;
    padding: 0 5px 0 3px;
    background-color: #fff;
}
.addressbar button
{
    width: 33px;
    height: 26px;
    display: flex;
    align-items: center;
    justify-content: center;
}
.addressbar svg
{
    width: 16px;
    height: 16px;
    stroke: #2a3139;
}
.pale
{
    opacity: .35;
}
.bar
{
    width: 1px;
    height: 28px;
    margin-left: 4px;
    background-color: #e0e4e8;
}
.addressbar .lock
{
    margin: 0 17px 0 18px;
    color: #222b34;
}
.url
{
    flex: 1;
    color: #6b747e;
    text-decoration: none;
    font-size: 13px;
}
.url b
{
    font-weight: 400;
    color: #000;
}
.addressbar .prompts
{
    width: 66px;
    height: 18px;
    margin-right: 3px;
    border: 1px solid #222;
    border-radius: 9px;
    font-size: 9px;
    font-weight: 600;
    white-space: nowrap;
}
.acts
{
    display: flex;
}
.acts button
{
    width: 26px;
}
.acts.wide
{
    margin-left: 4px;
}
.acts.wide button
{
    width: 33px;
}
.addressbar .user
{
    width: 20px;
    height: 20px;
}
.bookmarks
{
    height: 32px;
    display: flex;
    gap: 12px;
    padding: 6px 0 0 14px;
    background-color: #fff;
    border-bottom: 1px solid #b5c2bc;
}
.bookmarks a
{
    display: flex;
    height: 16px;
    gap: 8px;
    color: #333b44;
    text-decoration: none;
}
.bookmarks svg
{
    width: 16px;
    height: 16px;
}

/* gitea page */
.page
{
    position: relative;
    background-color: #202327;
    color: #bac6d1;
    font: 14px/20px Roboto, sans-serif;
}
.page-thumb
{
    position: absolute;
    right: 2px;
    bottom: 5px;
    width: 6px;
    height: 307px;
    border-radius: 3px;
    background-color: #2a9df4;
}
.content
{
    display: flex;
    align-items: flex-start;
    gap: 28px;
    padding: 0 60px 80px 88px;
}
.issue
{
    flex: 1;
    min-width: 0;
    padding: 0 14px 14px;
    background-color: #282c35;
    border: 1px solid #434851;
    border-top: none;
    border-radius: 0 0 4px 4px;
}
.editor
{
    position: relative;
}
.editor textarea
{
    display: block;
    width: 100%;
    height: 287px;
    padding: 4px 14px;
    overflow: hidden;
    resize: vertical;
    background-color: #16171b;
    border: 1px solid #4a4f58;
    border-top: none;
    border-radius: 0 0 4px 4px;
    line-height: 18px;
    color: #d2dbe6;
}
.squiggles
{
    position: absolute;
    left: 0;
    top: 110px;
    width: 100%;
    height: 3px;
}
.ta-thumb
{
    position: absolute;
    right: 4px;
    top: 64px;
    width: 6px;
    height: 210px;
    border-radius: 3px;
    background-color: #2a9df4;
}
.dropzone
{
    height: 42px;
    margin-top: 14px;
    border: 2px dashed #464a52;
    border-radius: 5px;
    line-height: 36px;
    text-align: center;
    color: #a4adb6;
}
.issue h2
{
    margin: 13px 0 14px;
    font-size: 18px;
    line-height: 22px;
    font-weight: 700;
}
.issue p
{
    padding-right: 16px;
}
.create
{
    display: block;
    width: 121px;
    height: 38px;
    margin: 15px 0 0 auto;
    background-color: #37803a;
    border: 1px solid #5f9f61;
    border-radius: 4px;
    color: #fff;
    font-weight: 500;
}
.meta
{
    width: 287px;
    height: 41px;
    overflow: hidden;
    flex: none;
    padding-left: 14px;
    background-color: #282c35;
    border: 1px solid #434851;
    border-top: none;
    border-radius: 0 0 4px 4px;
    color: #7b838c;
    line-height: 4px;
}
.foot
{
    height: 36px;
    display: flex;
    align-items: center;
    justify-content: space-between;
    padding: 3px 23px 0 20px;
    background-color: #2d333b;
    border-top: 1px solid #434851;
    color: #a9b1ba;
}
.foot nav
{
    display: flex;
}
.foot a
{
    display: flex;
    align-items: center;
    gap: 4px;
    color: #a9b1ba;
    text-decoration: none;
}
.foot .mute
{
    color: #6d7683;
}
.foot a + a
{
    margin-left: 8px;
    padding-left: 9px;
    border-left: 1px solid #4a5059;
}
.foot svg
{
    width: 16px;
    height: 16px;
    stroke: #6d7683;
}
```
